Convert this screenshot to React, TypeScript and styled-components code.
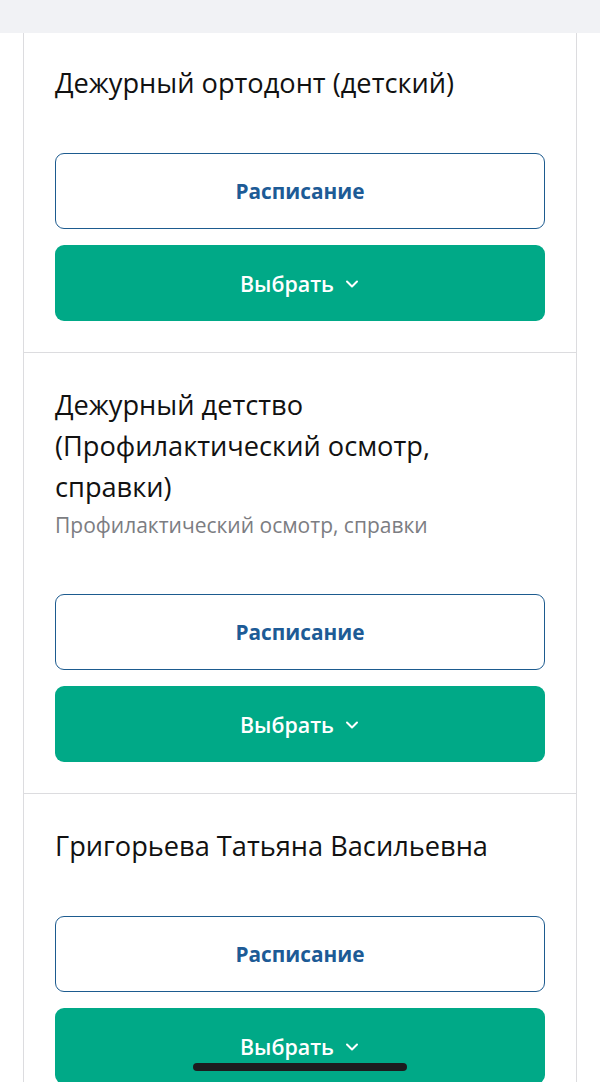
import { createGlobalStyle } from 'styled-components';
import styled from 'styled-components';

const GlobalStyle = createGlobalStyle`
  html, body {
    margin: 0;
    padding: 0;
    background: #ffffff;
    font-family: "Open Sans", "Noto Sans", sans-serif;
    -webkit-font-smoothing: antialiased;
  }
`;

const Page = styled.div`
  display: flex;
  flex-direction: column;
  min-height: 1082px;
  background: #ffffff;
`;

const TopBar = styled.div`
  height: 33px;
  background: #f1f2f5;
  flex-shrink: 0;
`;

const List = styled.div`
  margin: 0 23px;
  border-left: 1px solid #dcdcdf;
  border-right: 1px solid #dcdcdf;
  background: #fff;
`;

const Item = styled.div`
  display: flex;
  flex-direction: column;
  padding: 29px 31px 31px;
  & + & {
    border-top: 1px solid #dcdcdf;
    padding-top: 31px;
  }
`;

const Title = styled.div`
  font-size: 27.2px;
  line-height: 41px;
  color: #111;
  font-weight: 400;
`;

const Subtitle = styled.div`
  margin-top: 3px;
  font-size: 21px;
  line-height: 30px;
  color: #7c7d82;
`;

const Actions = styled.div<{ $gap: number }>`
  display: flex;
  flex-direction: column;
  gap: 16px;
  margin-top: ${p => p.$gap}px;
`;

const Button = styled.button<{ $primary?: boolean }>`
  display: flex;
  align-items: center;
  justify-content: center;
  gap: 10px;
  height: 76px;
  width: 100%;
  box-sizing: border-box;
  border-radius: 9px;
  font-family: "Open Sans", "Noto Sans", sans-serif;
  font-size: ${p => (p.$primary ? 21.4 : 20.8)}px;
  font-weight: ${p => (p.$primary ? 600 : 700)};
  cursor: pointer;
  border: ${p => (p.$primary ? 'none' : '1.5px solid #1d5b8f')};
  background: ${p => (p.$primary ? '#00a987' : '#ffffff')};
  color: ${p => (p.$primary ? '#ffffff' : '#1d5b96')};
`;

const Chevron = styled.svg`
  width: 16px;
  height: 16px;
  margin-top: 1px;
`;

const HomeIndicator = styled.div`
  position: fixed;
  left: 193px;
  bottom: 11px;
  width: 214px;
  height: 8px;
  border-radius: 4px;
  background: #1c1c1e;
`;

type Doctor = { title: string; subtitle?: string };

const doctors: Doctor[] = [
  { title: 'Дежурный ортодонт (детский)' },
  {
    title: 'Дежурный детство (Профилактический осмотр, справки)',
    subtitle: 'Профилактический осмотр, справки',
  },
  { title: 'Григорьева Татьяна Васильевна' },
];

function DownIcon() {
  return (
    <Chevron viewBox="0 0 16 16" fill="none">
      <path d="M3 5.5l5 5 5-5" stroke="#fff" strokeWidth="2" strokeLinecap="round" strokeLinejoin="round" />
    </Chevron>
  );
}

export default function App() {
  return (
    <Page>
      <GlobalStyle />
      <TopBar />
      <List>
        {doctors.map(d => (
          <Item key={d.title}>
            <Title>{d.title}</Title>
            {d.subtitle && <Subtitle>{d.subtitle}</Subtitle>}
            <Actions $gap={d.subtitle ? 54 : 50}>
              <Button>Расписание</Button>
              <Button $primary>
                Выбрать <DownIcon />
              </Button>
            </Actions>
          </Item>
        ))}
      </List>
      <HomeIndicator />
    </Page>
  );
}
